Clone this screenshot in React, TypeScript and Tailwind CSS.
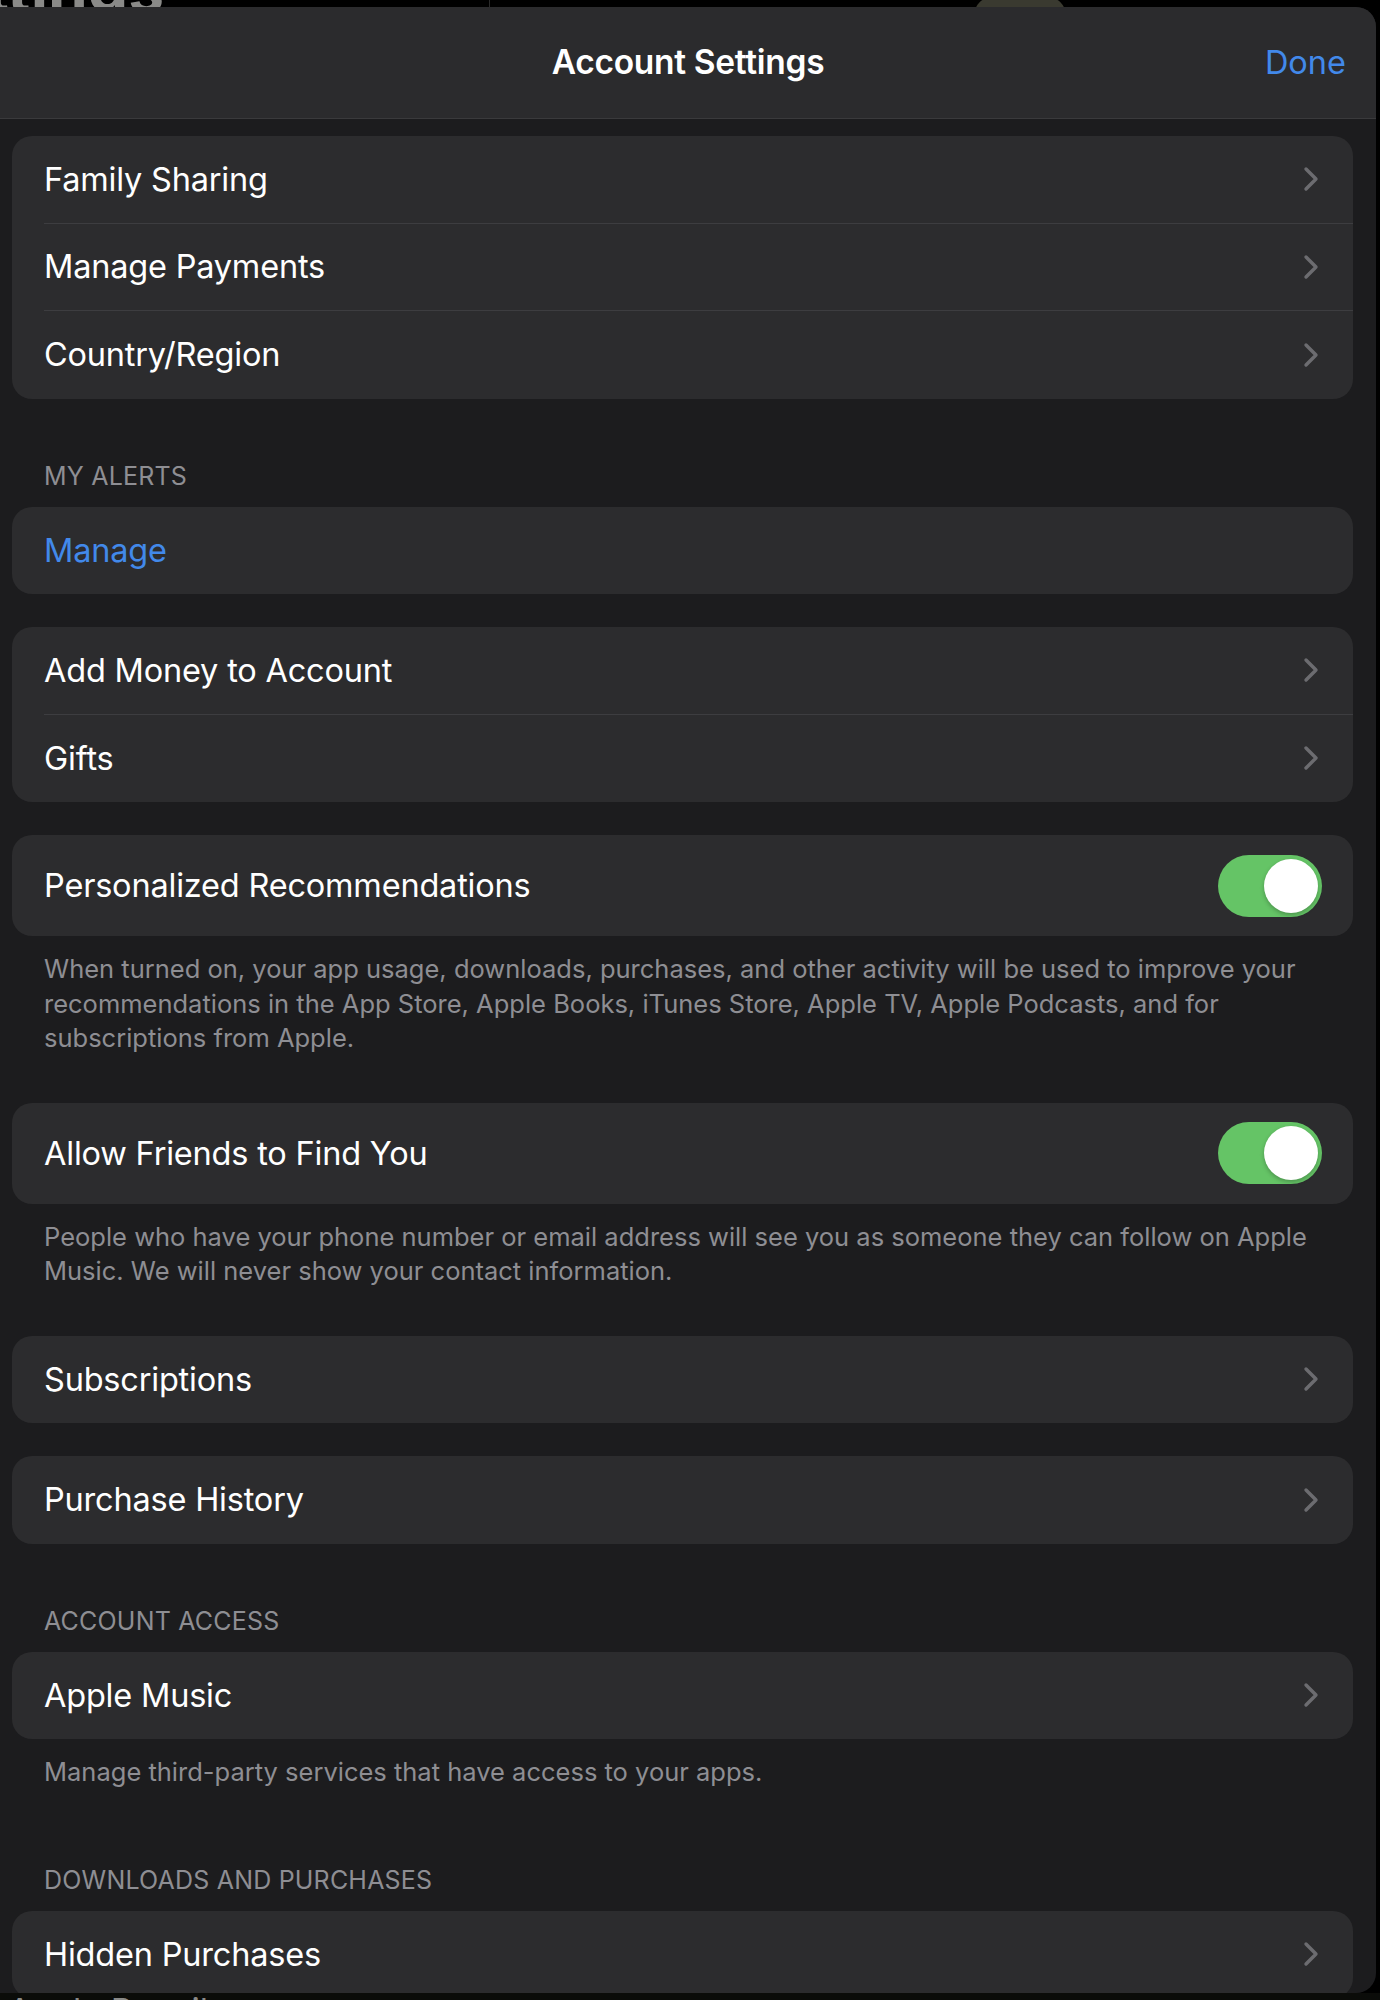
import {ReactNode} from 'react'

const font = {fontFamily: 'Inter, "Noto Sans", sans-serif'}

const Chevron = () => (
  <svg width="16" height="26" viewBox="0 0 16 26" fill="none" className="shrink-0">
    <path d="M3 3 L13 13 L3 23" stroke="#6c6c70" strokeWidth="3.4" strokeLinecap="round" strokeLinejoin="round" />
  </svg>
)

const Toggle = () => (
  <div className="w-[104px] h-[62px] rounded-full bg-[#65c466] flex items-center justify-end pr-[4px] shrink-0">
    <div className="w-[54px] h-[54px] rounded-full bg-white shadow-[0_2px_4px_rgba(0,0,0,0.25)]" />
  </div>
)

type RowProps = {
  label: string
  blue?: boolean
  toggle?: boolean
  divider?: boolean
}

function clsxLite(...parts: string[]) {
  return parts.filter(Boolean).join(' ')
}

const Row = ({label, blue, toggle, divider}: RowProps) => (
  <div className={toggle ? 'h-[101px] flex pl-[32px]' : 'h-[87.5px] flex pl-[32px]'}>
    <div
      className={clsxLite(
        'flex-1 flex items-center h-full',
        toggle ? 'pr-[31px]' : 'pr-[34px]',
        divider ? 'border-b border-[#3d3d40]' : ''
      )}
    >
      <span
        className={
          blue
            ? 'flex-1 pt-[2px] text-[32.5px] text-[#4289ea] tracking-[-0.2px]'
            : 'flex-1 pt-[2px] text-[32.5px] text-white tracking-[-0.2px]'
        }
      >
        {label}
      </span>
      {toggle ? <Toggle /> : blue ? null : <Chevron />}
    </div>
  </div>
)

const Card = ({children, className = ''}: {children: ReactNode; className?: string}) => (
  <div className={'bg-[#2c2c2e] rounded-[20px] overflow-hidden ' + className}>{children}</div>
)

const SectionHeader = ({children, top = 'mt-[61px]'}: {children: ReactNode; top?: string}) => (
  <div
    className={
      top + ' mb-[13px] pl-[32px] h-[34px] flex items-center text-[25px] text-[#8e8e93] uppercase tracking-[0.2px]'
    }
  >
    {children}
  </div>
)

const Footnote = ({children}: {children: ReactNode}) => (
  <div className="mt-[16px] pl-[32px] text-[25.5px] leading-[34.5px] text-[#8e8e93] whitespace-nowrap">
    {children}
  </div>
)

export default function App() {
  return (
    <div className="w-[1380px] h-[2000px] bg-black overflow-hidden flex flex-col" style={font}>
      <div className="h-[7px] overflow-hidden shrink-0 relative">
        <div className="absolute left-[-14px] bottom-[-14px] text-[64px] font-bold text-[#8a8a88] leading-none">
          ttings
        </div>
        <div className="absolute left-[489px] top-0 w-px h-full bg-[#2a2a2a]" />
        <div className="absolute left-[975px] top-[-2px] w-[90px] h-[30px] rounded-full bg-[#3a3a30]" />
      </div>
      <div className="h-[1986px] w-[1376px] shrink-0 bg-[#1c1c1e] rounded-tr-[20px] rounded-br-[20px] overflow-hidden flex flex-col">
        <div className="h-[112px] shrink-0 bg-[#2b2b2d] border-b border-[#3a3a3c] flex items-center justify-center relative">
          <span className="text-[33.5px] font-semibold text-white tracking-[-0.3px]">Account Settings</span>
          <span className="absolute right-[30px] top-1/2 -translate-y-1/2 text-[32.5px] text-[#4289ea]">Done</span>
        </div>
        <div className="pl-[12px] pr-[23px] pt-[17px] flex flex-col">
          <Card>
            <Row label="Family Sharing" divider />
            <Row label="Manage Payments" divider />
            <Row label="Country/Region" />
          </Card>

          <SectionHeader>My Alerts</SectionHeader>
          <Card>
            <Row label="Manage" blue />
          </Card>

          <Card className="mt-[33px]">
            <Row label="Add Money to Account" divider />
            <Row label="Gifts" />
          </Card>

          <Card className="mt-[33px]">
            <Row label="Personalized Recommendations" toggle />
          </Card>
          <Footnote>
            When turned on, your app usage, downloads, purchases, and other activity will be used to improve your
            <br />
            recommendations in the App Store, Apple Books, iTunes Store, Apple TV, Apple Podcasts, and for
            <br />
            subscriptions from Apple.
          </Footnote>

          <Card className="mt-[47px]">
            <Row label="Allow Friends to Find You" toggle />
          </Card>
          <Footnote>
            People who have your phone number or email address will see you as someone they can follow on Apple
            <br />
            Music. We will never show your contact information.
          </Footnote>

          <Card className="mt-[47px]">
            <Row label="Subscriptions" />
          </Card>

          <Card className="mt-[33px]">
            <Row label="Purchase History" />
          </Card>

          <SectionHeader>Account Access</SectionHeader>
          <Card>
            <Row label="Apple Music" />
          </Card>
          <Footnote>Manage third-party services that have access to your apps.</Footnote>

          <SectionHeader top="mt-[74px]">Downloads and Purchases</SectionHeader>
          <Card>
            <Row label="Hidden Purchases" />
          </Card>
        </div>
      </div>
      <div className="h-[7px] overflow-hidden shrink-0 relative bg-[#0b0c09]">
        <div className="absolute left-[8px] top-[1px] text-[34px] text-[#8a8a88] leading-none">Apple Pencil</div>
      </div>
    </div>
  )
}
